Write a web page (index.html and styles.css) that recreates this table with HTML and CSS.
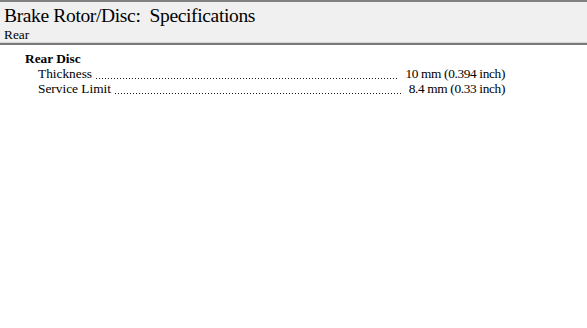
FILE: index.html
```html
<!DOCTYPE html>
<html>
<head>
<meta charset="utf-8">
<link rel="stylesheet" href="styles.css">
</head>
<body>
<div class="header">
  <div class="title">Brake Rotor/Disc:&nbsp; Specifications</div>
  <div class="subtitle">Rear</div>
</div>
<div class="content">
  <div class="group">Rear Disc</div>
  <div class="row">
    <span class="label">Thickness</span>
    <span class="dots"></span>
    <span class="value">10 mm (0.394 inch)</span>
  </div>
  <div class="row">
    <span class="label">Service Limit</span>
    <span class="dots"></span>
    <span class="value">8.4 mm (0.33 inch)</span>
  </div>
</div>
</body>
</html>
```
FILE: styles.css
```css
html, body {
  margin: 0;
  padding: 0;
  background: #ffffff;
  font-family: "Liberation Serif", "Times New Roman", serif;
  color: #000000;
}

.header {
  border-top: 2px solid #808080;
  border-bottom: 2px solid #7a7a7a;
  box-shadow: inset 0 -1px 0 #d4d4d4;
  background: #f0f0f0;
  padding: 3px 4px 3px 4px;
  height: 35px;
}

.title {
  font-size: 19.5px;
  letter-spacing: -0.35px;
  line-height: 21px;
}

.subtitle {
  font-size: 13.33px;
  line-height: 15px;
  margin-top: 1px;
}

.content {
  padding: 6px 0 0 25px;
  font-size: 13.33px;
  line-height: 15px;
}

.group {
  font-weight: bold;
}

.row {
  display: flex;
  width: 480px;
  padding-left: 13px;
  box-sizing: border-box;
  white-space: nowrap;
}

.label {
  flex: none;
}

/* dotted leader between a label and its value */
.dots {
  flex: 1 1 auto;
  margin: 0 8px 0 4px;
  background-image: linear-gradient(to right, #1a1a1a 1px, transparent 1px);
  background-size: 3px 1px;
  background-repeat: repeat-x;
  background-position: 0 12px;
}

.value {
  flex: none;
  letter-spacing: -0.35px;
}
```
